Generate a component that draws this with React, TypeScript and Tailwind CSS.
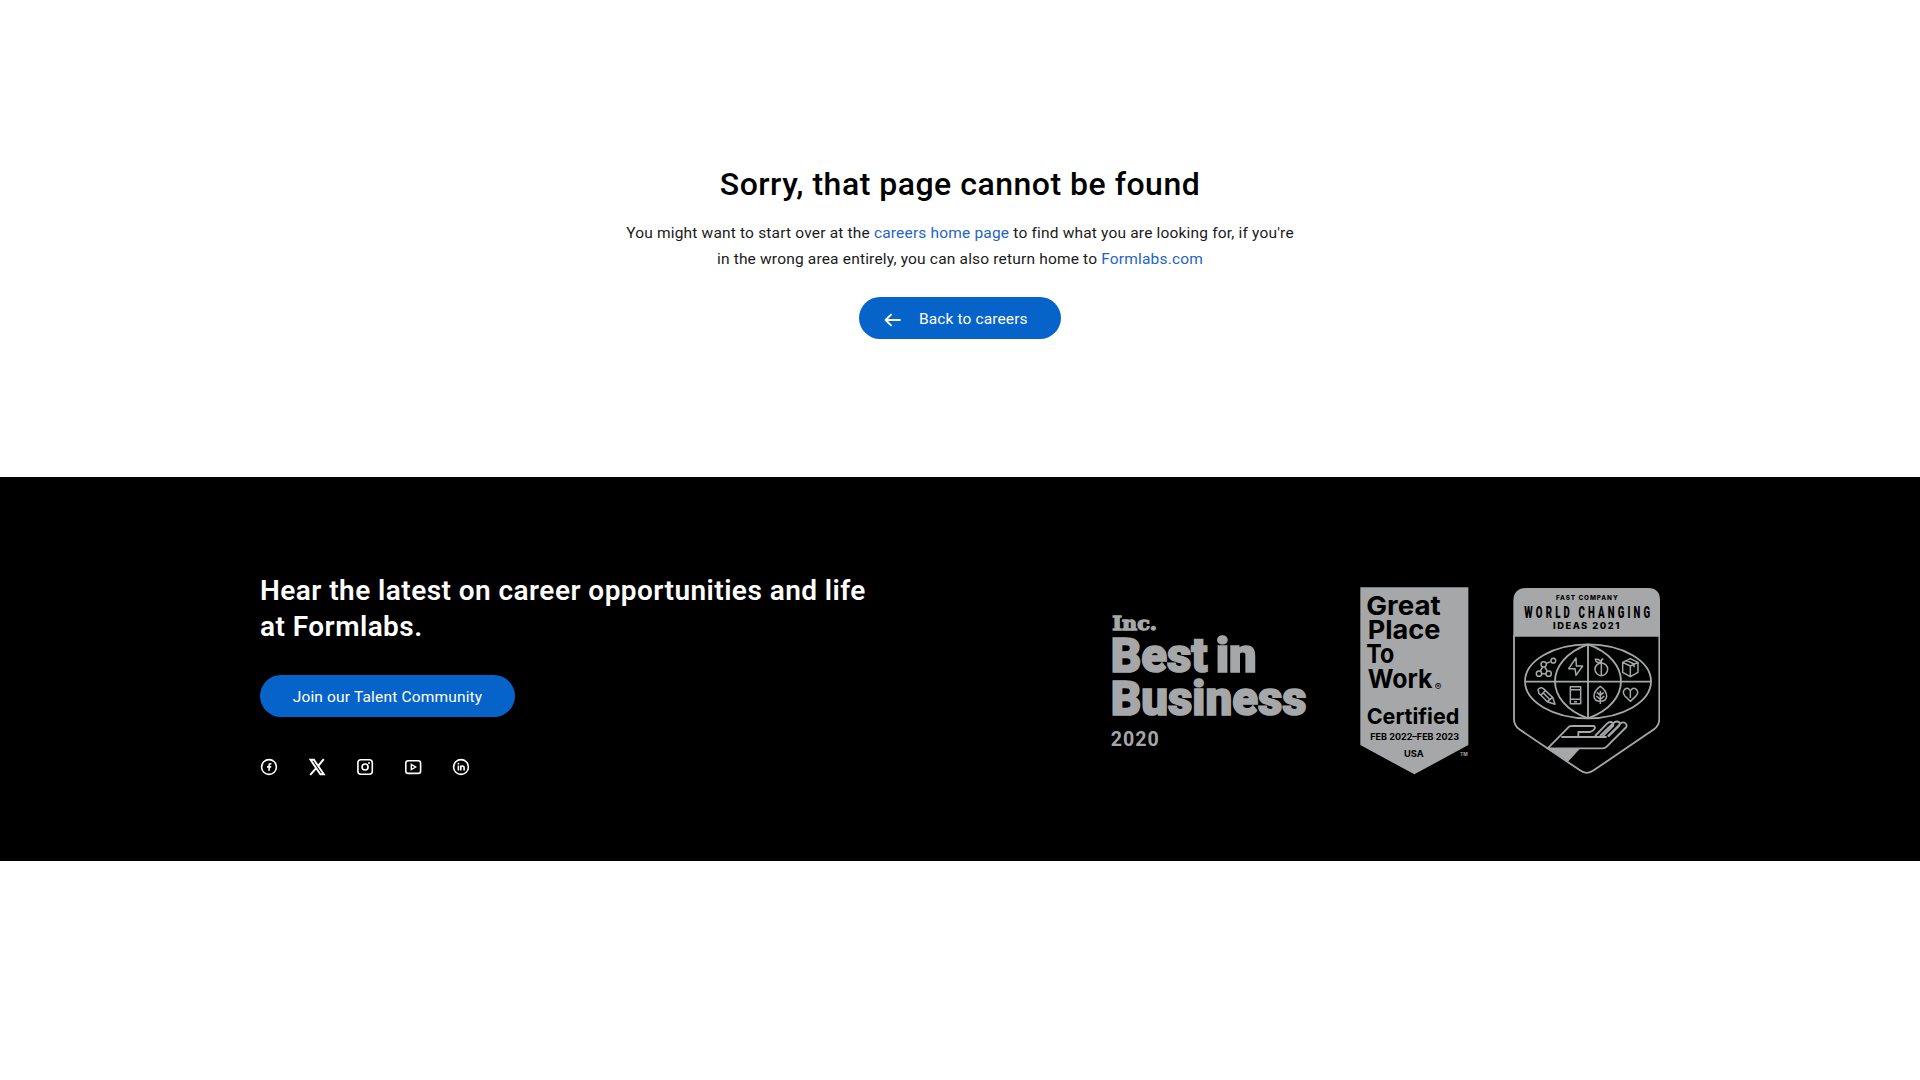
import React from "react";

type FitProps = {
  x: number;
  y: number;
  w: number;
  size: number;
  weight?: number;
  font?: string;
  fill?: string;
  stroke?: number;
  spacing?: boolean;
  children: string;
};

function Fit({ x, y, w, size, weight = 700, font = "Inter", fill = "#000", stroke = 0, spacing = false, children }: FitProps) {
  return (
    <text x={x} y={y} textLength={w} lengthAdjust={spacing ? "spacing" : "spacingAndGlyphs"} fontSize={size} fontWeight={weight} fontFamily={`"${font}", sans-serif`} fill={fill} stroke={stroke ? fill : "none"} strokeWidth={stroke}>
      {children}
    </text>
  );
}

const GREY = "#a5a7a8";

function IncBadge() {
  return (
    <svg className="h-[136px] w-[200px] shrink-0 overflow-visible" viewBox="30 39 600 408">
      <Fit x={37} y={89} w={134} size={58} weight={700} font="DejaVu Serif" fill={GREY} stroke={4}>Inc.</Fit>
      <Fit x={32} y={217} w={291} size={143} weight={900} font="Roboto" fill={GREY} stroke={5}>Best</Fit>
      <Fit x={347} y={217} w={123} size={143} weight={900} font="Roboto" fill={GREY} stroke={5}>in</Fit>
      <Fit x={32} y={344} w={588} size={143} weight={900} font="Roboto" fill={GREY} stroke={5}>Business</Fit>
      <Fit x={32} y={438} w={144} size={59} font="Roboto" fill={GREY} spacing>2020</Fit>
    </svg>
  );
}

function GreatPlaceBadge() {
  return (
    <svg className="ml-[50px] h-[188px] w-[110px] shrink-0 overflow-visible" viewBox="30 21 330 564">
      <path d="M31 22H355V495L193 583L31 495Z" fill={GREY} />
      <Fit x={49} y={104} w={223} size={78}>Great</Fit>
      <Fit x={53} y={178} w={218} size={78}>Place</Fit>
      <Fit x={49} y={250} w={84} size={78}>To</Fit>
      <Fit x={53} y={325} w={194} size={78}>Work</Fit>
      <Fit x={254} y={329} w={20} size={26} weight={500}>®</Fit>
      <Fit x={50} y={432} w={278} size={66}>Certified</Fit>
      <Fit x={61} y={479} w={266} size={27}>FEB 2022–FEB 2023</Fit>
      <Fit x={162} y={531} w={59} size={27}>USA</Fit>
      <Fit x={330} y={529} w={23} size={14} fill={GREY}>TM</Fit>
    </svg>
  );
}

function WorldChangingBadge() {
  return (
    <svg className="ml-[43px] h-[188px] w-[147px] shrink-0" viewBox="39 21 441 564" fill="none" stroke={GREY} strokeWidth={5.5} strokeLinejoin="round">
      <path d="M40 170V60Q42 25 78 24H444Q480 25 480 60V170Z" fill={GREY} stroke="none" />
      <path d="M42 165V416Q42 436 58 448L240 571Q260 586 281 571L462 448Q478 436 478 416V165" />
      <Fit x={168} y={60} w={185} size={19} weight={800} spacing>FAST COMPANY</Fit>
      <g transform="translate(73 113) scale(.58 1)">
        <text textLength={650} fontSize={50} fontWeight={900} fontFamily="Roboto, sans-serif" fill="#000" stroke="none">WORLD CHANGING</text>
      </g>
      <Fit x={159} y={148} w={199} size={28} weight={800} spacing>IDEAS 2021</Fit>
      <ellipse cx={264} cy={304} rx={189} ry={111} />
      <path d="M264 193V415M75 305H454M264 193C132 240 132 368 264 415M264 193C396 240 396 368 264 415" />
      <g strokeWidth={4.5}>
        <circle cx={131} cy={253} r={8} />
        <circle cx={160} cy={242} r={7} />
        <circle cx={117} cy={281} r={8} />
        <circle cx={146} cy={281} r={8} />
        <path d="M139 250L152 245M128 261L121 273M134 261L142 273M125 281H138" />
        <path d="M228 234L206 266H225L228 286L248 258H229Z" />
        <circle cx={304} cy={268} r={19} />
        <path d="M304 247V287M304 247Q302 238 310 236M303 248Q288 250 286 238Q299 236 303 248Z" />
        <path d="M391 236L414 247V277L391 290L368 277V247ZM368 247L391 258L414 247M391 258V290M379 241L402 252V262" />
        <path d="M116 334Q111 329 118 325Q125 321 130 326L158 352L165 373L142 365L116 339ZM124 344L137 331M142 365L158 352M130 339L148 357" />
        <path d="M211 320H242V371H211ZM211 329H242M211 358H242M222 365H231" />
        <path d="M301 319Q282 332 282 349Q284 364 301 364Q318 364 320 349Q320 332 301 319ZM301 332V372M301 346L291 337M301 346L311 337M301 358L289 348M301 358L313 348" />
        <path d="M391 364L374 347Q366 336 374 328Q385 320 391 333Q397 320 409 328Q417 336 409 347ZM391 334V354" />
      </g>
      <path d="M143 505L208 439Q210 438 216 438H280Q287 440 284 446Q280 454 270 456H235V469M184 471H320M143 505H308Q315 505 320 500L379 441Q382 435 377 430Q370 424 362 430L323 469M285 468L321 431Q330 423 338 428Q342 432 339 438L308 469M300 468L339 430Q349 421 358 427Q362 432 356 439L325 470" />
      <path d="M143 505H241L204 545Z" fill={GREY} stroke="none" />
    </svg>
  );
}

function Facebook() {
  return (
    <svg className="size-5" viewBox="0 0 20 20" fill="none" stroke="#fff" strokeWidth={1.6}>
      <circle cx={9} cy={10} r={7.4} />
      <path d="M11.4 6.7H10.4Q9.1 6.7 9.1 8V13.8M7 9.9H11.2" />
    </svg>
  );
}
function XLogo() {
  return (
    <svg className="size-5" viewBox="0 0 20 20" fill="none" stroke="#fff">
      <path d="M2.5 2.8H5.9L15.8 17.2H12.4Z" strokeWidth={1.9} />
      <path d="M15.8 2.2L10 9M8 11.3L2.2 17.8" strokeWidth={2} />
    </svg>
  );
}
function Instagram() {
  return (
    <svg className="size-5" viewBox="0 0 20 20" fill="none" stroke="#fff" strokeWidth={1.6}>
      <rect x={1.9} y={2.8} width={14.4} height={14.4} rx={3} />
      <circle cx={9.1} cy={10} r={3} />
      <circle cx={13} cy={6} r={1} fill="#fff" stroke="none" />
    </svg>
  );
}
function YouTube() {
  return (
    <svg className="size-5" viewBox="0 0 20 20" fill="none" stroke="#fff" strokeWidth={1.6}>
      <rect x={1.8} y={3.8} width={14.8} height={12.6} rx={2.4} />
      <path d="M7.3 7.5V12.5L11.6 10Z" strokeWidth={1.4} />
    </svg>
  );
}
function LinkedIn() {
  return (
    <svg className="size-5" viewBox="0 0 20 20" fill="none" stroke="#fff" strokeWidth={1.6}>
      <circle cx={9} cy={10} r={7.4} />
      <path d="M6.4 8.6V13.4M8.8 13.4V8.6M8.8 10.6Q8.8 9 10.4 9Q12.1 9 12.1 10.8V13.4" />
      <circle cx={6.4} cy={6.7} r={0.9} fill="#fff" stroke="none" />
    </svg>
  );
}

export default function App() {
  return (
    <div className="min-h-screen bg-white font-['Roboto',sans-serif] text-black">
      <main className="flex h-[477px] flex-col items-center pt-[164px]">
        <h1 className="text-[32px] leading-10 font-medium tracking-[0.5px]">Sorry, that page cannot be found</h1>
        <p className="mt-4 text-center text-[15.5px] leading-[26px] tracking-[0.18px] text-[#1a1a1a]">
          You might want to start over at the <a className="text-[#2463c9]">careers home page</a> to find what you are looking for, if you're
          <br />
          in the wrong area entirely, you can also return home to <a className="text-[#2463c9]">Formlabs.com</a>
        </p>
        <a className="mt-[25px] flex h-[42px] w-[202px] items-center rounded-full bg-[#0663c9] pl-[25px] text-[15.5px] tracking-[0.12px] text-white">
          <svg className="mt-[3px] h-4 w-[18px]" viewBox="0 0 18 16" fill="none" stroke="#fff" strokeWidth={1.9} strokeLinecap="round" strokeLinejoin="round">
            <path d="M15.8 8H1.6M7 2.6L1.6 8L7 13.4" />
          </svg>
          <span className="ml-[17px] pt-[3px]">Back to careers</span>
        </a>
      </main>
      <footer className="h-[384px] bg-black">
        <div className="mx-auto flex h-full w-[1400px] justify-between text-white">
          <div className="pt-24">
            <h2 className="text-[28px] leading-9 font-semibold tracking-[0.45px]">
              Hear the latest on career opportunities and life
              <br />
              at Formlabs.
            </h2>
            <a className="mt-[30px] flex h-[42px] w-[255px] items-center justify-center rounded-full bg-[#0663c9] pt-[3px] text-[15.5px] tracking-[0.17px]">Join our Talent Community</a>
            <div className="mt-10 flex gap-7">
              <Facebook />
              <XLogo />
              <Instagram />
              <YouTube />
              <LinkedIn />
            </div>
          </div>
          <div className="flex items-center pt-6">
            <IncBadge />
            <GreatPlaceBadge />
            <WorldChangingBadge />
          </div>
        </div>
      </footer>
    </div>
  );
}
